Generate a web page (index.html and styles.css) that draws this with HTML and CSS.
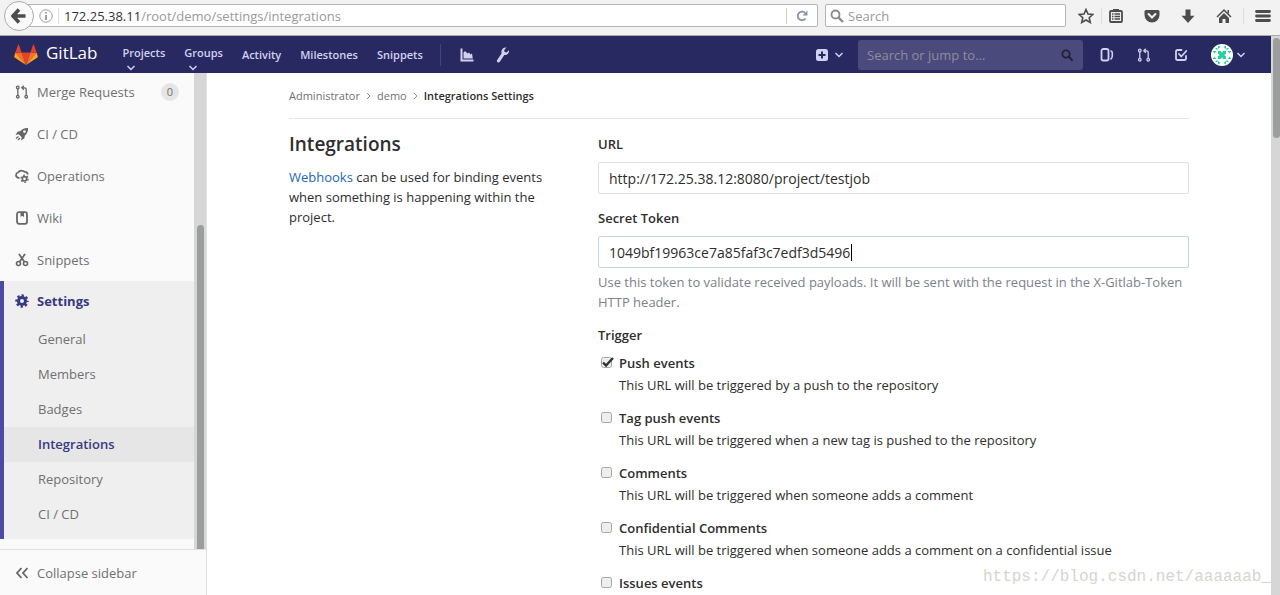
FILE: index.html
```html
<!DOCTYPE html>
<html lang="en">
<head>
    <meta charset="UTF-8">
    <meta name="viewport" content="width=device-width, initial-scale=1">
    <title>Integrations Settings</title>
    <link rel="stylesheet" href="styles.css">
</head>
<body>
    <!-- Browser toolbar -->
    <div class="toolbar">
        <button class="back-btn" aria-label="Back">
            <svg width="16" height="16" viewBox="0 0 16 16"><path d="M8 1.500 2 8l6 6.500M3 8h11.500" fill="none" stroke="#4d4d4d" stroke-width="3.600"/></svg>
        </button>
        <div class="url-bar">
            <svg width="14" height="14" viewBox="0 0 14 14"><circle cx="7" cy="7" r="6.200" fill="none" stroke="#999"/><path d="M6.200 3h1.600v1.600H6.200zM6.200 6h1.600v5H6.200z" fill="#888"/></svg>
            <span class="url-sep"></span>
            <div class="url-text" role="textbox" aria-label="Address" tabindex="0"><span class="host">172.25.38.11</span>/root/demo/settings/integrations</div>
            <button class="reload-btn" aria-label="Reload">
                <svg width="12" height="12" viewBox="0 0 12 12"><path d="M9.500 8.500A4.300 4.300 0 1 1 9 2.800" fill="none" stroke="#8597a5" stroke-width="1.800"/><path d="M11.500.5v5h-5z" fill="#8597a5"/></svg>
            </button>
        </div>
        <div class="browser-search">
            <svg width="14" height="14" viewBox="0 0 14 14"><circle cx="5.500" cy="5.500" r="4" fill="none" stroke="#8a8a8a" stroke-width="1.800"/><path d="m8.500 8.500 4.500 4.500" stroke="#8a8a8a" stroke-width="2.400"/></svg>
            <input type="text" placeholder="Search" aria-label="Search the web">
        </div>
        <div class="toolbar-icons">
            <button aria-label="Bookmark"><svg width="16" height="16" viewBox="0 0 16 16"><path d="m8 1.500 2 4.500 4.800.5-3.600 3.200 1.100 4.800L8 12l-4.300 2.500 1.100-4.800L1.200 6.500 6 6z" fill="none" stroke="#4d4d4d" stroke-width="1.600"/></svg></button>
            <button class="list-btn" aria-label="Bookmarks list"><svg width="16" height="16" viewBox="0 0 16 16"><path d="M5 3V1h6v2" fill="#4d4d4d"/><rect x="2" y="3" width="12" height="11" rx="1" fill="none" stroke="#4d4d4d" stroke-width="1.800"/><path d="M4 6h1.500M4 8.500h1.500M4 11h1.500M6.500 6H12M6.500 8.500H12M6.500 11H12" stroke="#4d4d4d" stroke-width="1.300"/></svg></button>
            <button aria-label="Pocket"><svg width="16" height="16" viewBox="0 0 16 16"><path d="M2 2h12q1.500 0 1.500 1.500V7a7.500 7.500 0 0 1-15 0V3.500Q.5 2 2 2z" fill="#4d4d4d"/><path d="m4.500 6 3.500 3.500L11.500 6" fill="none" stroke="#f2f2f2" stroke-width="2" stroke-linecap="round"/></svg></button>
            <button aria-label="Downloads"><svg width="16" height="16" viewBox="0 0 16 16"><path d="M5.500 1.500h5v6.200h4L8 15 1.500 7.700h4z" fill="#4d4d4d"/></svg></button>
            <button aria-label="Home"><svg width="16" height="16" viewBox="0 0 16 16"><path d="M1 9 8 2l7 7" fill="none" stroke="#4d4d4d" stroke-width="1.500"/><path d="M11.500 2H13v4l-1.500-1.500zM3 10l5-5 5 5v5H9.500v-4h-3v4H3z" fill="#4d4d4d"/></svg></button>
            <button class="menu-btn" aria-label="Menu"><svg width="16" height="16" viewBox="0 0 16 16"><path d="M1.500 3.500h13M1.500 8h13M1.500 12.500h13" stroke="#4d4d4d" stroke-width="2.800" stroke-linecap="round"/></svg></button>
        </div>
    </div>

    <div class="viewport">
        <div class="app">
            <!-- Navigation Bar -->
            <header class="navbar">
                <a class="brand" href="#">
                    <svg width="24" height="22" viewBox="0 0 24 22">
                        <path d="m12 21 4.400-12.500H7.600z" fill="#e24329"/>
                        <path d="M12 21 7.600 8.500H1.400zM12 21l4.400-12.500h6.200z" fill="#fc6d26"/>
                        <path d="M1.400 8.500.2 12.400c-.1.400 0 .8.400 1L12 21zM22.600 8.500l1.200 3.900c.1.400 0 .8-.4 1L12 21z" fill="#fca326"/>
                        <path d="M1.400 8.500h6.200L4.900.8c-.1-.4-.7-.4-.8 0zM22.600 8.500h-6.200L19.100.8c.1-.4.7-.4.8 0z" fill="#e24329"/>
                    </svg>
                    <span>GitLab</span>
                </a>
                <nav class="nav-links">
                    <a class="drop" href="#">Projects<svg width="10" height="6" viewBox="0 0 10 6"><path d="m1.500 1 3.500 3.500L8.500 1"/></svg></a>
                    <a class="drop" href="#">Groups<svg width="10" height="6" viewBox="0 0 10 6"><path d="m1.500 1 3.500 3.500L8.500 1"/></svg></a>
                    <a href="#">Activity</a>
                    <a href="#">Milestones</a>
                    <a href="#">Snippets</a>
                </nav>
                <div class="nav-tools">
                    <a href="#" aria-label="Instance statistics"><svg width="14" height="14" viewBox="0 0 14 14"><path d="M.5.5h2v11H13.500v2H.5z"/><path d="M3.500 10.500v-6L5 3l2.500 2.500L9 4.500l1.500 2L12 5.500l.8 5z"/></svg></a>
                    <a href="#" aria-label="Admin area"><svg width="14" height="16" viewBox="0 0 14 16"><path d="M8.300.8A4 4 0 0 0 5.700 6.200L1.200 13a1.500 1.500 0 0 0 2.600 1.700l4.500-6.800A4 4 0 0 0 13 3.200L10.500 5.500 8.600 5l-.4-2L10.500.6A4 4 0 0 0 8.300.8z"/></svg></a>
                </div>
                <button class="new-btn" aria-label="New">
                    <svg width="12" height="12" viewBox="0 0 12 12"><rect width="12" height="12" rx="2.500" fill="#d1d1f0"/><path d="M6 2.500v7M2.500 6h7" stroke="#292961" stroke-width="2"/></svg>
                    <svg class="chev" width="10" height="6" viewBox="0 0 10 6"><path d="m1.500 1 3.500 3.500L8.500 1"/></svg>
                </button>
                <div class="nav-search">
                    <input type="text" placeholder="Search or jump to…" aria-label="Search or jump to">
                    <svg width="12" height="12" viewBox="0 0 12 12"><circle cx="5" cy="5" r="3.700" fill="none" stroke="#222236" stroke-width="1.800"/><path d="m7.800 7.800 3.200 3.200" stroke="#222236" stroke-width="2.200" stroke-linecap="round"/></svg>
                </div>
                <div class="nav-icons">
                    <a href="#" aria-label="Issues"><svg width="14" height="14" viewBox="0 0 14 14"><rect x="1.500" y="1" width="7" height="11.500" rx="1.800" fill="none" stroke="#d1d1f0" stroke-width="1.800"/><path d="M10.500 2.800q1.800.5 1.800 2V8q0 2-1.800 3.500" fill="none" stroke="#d1d1f0" stroke-width="1.600"/></svg></a>
                    <a href="#" aria-label="Merge requests"><svg width="14" height="14" viewBox="0 0 14 14"><g fill="none" stroke="#d1d1f0" stroke-width="1.300"><circle cx="2.800" cy="2.500" r="1.300"/><circle cx="2.800" cy="11.700" r="1.300"/><circle cx="11.200" cy="11.700" r="1.300"/><path d="M2.800 4v6.200M11.200 10.200V4.500q0-1.700-1.700-1.700H7.500M8.800.8l-2 2 2 2"/></g></svg></a>
                    <a href="#" aria-label="Todos"><svg width="14" height="14" viewBox="0 0 14 14"><path d="M7.500 2H3.800Q2 2 2 3.800v6.400Q2 12 3.800 12h6.400q1.800 0 1.800-1.800V8M5 6l2.300 2.500 5-5.500" fill="none" stroke="#d1d1f0" stroke-width="1.800" stroke-linecap="round"/></svg></a>
                    <button class="user-btn" aria-label="Account">
                        <svg width="22" height="22" viewBox="0 0 22 22"><circle cx="11" cy="11" r="11" fill="#fff"/><path d="M7 1.500 9.500 3 7 5zM15 1.500 12.500 3 15 5zM7 20.500 9.500 19 7 17zM15 20.500 12.500 19l2.500-2zM1.500 7h4L3.500 9.500zM20.500 7h-4l2 2.500zM1.500 15h4L3.500 12.500zM20.500 15h-4l2-2.500zM4 4h2.500v2.500zM18 4h-2.500v2.500zM4 18h2.500v-2.500zM18 18h-2.500v-2.500zM7 7h3l1 2 1-2h3v3l-2 1 2 1v3h-3l-1-2-1 2H7v-3l2-1-2-1z" fill="#27cf9b"/></svg>
                        <svg class="chev" width="10" height="6" viewBox="0 0 10 6"><path d="m1.500 1 3.500 3.500L8.500 1"/></svg>
                    </button>
                </div>
            </header>

            <div class="page">
                <!-- Sidebar -->
                <aside class="sidebar">
                    <div class="side-scroll">
                        <nav class="side-list">
                            <a class="side-item" href="#"><svg width="14" height="14" viewBox="0 0 14 14"><g fill="none" stroke="#666" stroke-width="1.300"><circle cx="2.800" cy="2.500" r="1.300"/><circle cx="2.800" cy="11.700" r="1.300"/><circle cx="11.200" cy="11.700" r="1.300"/><path d="M2.800 4v6.200M11.200 10.200V4.500q0-1.700-1.700-1.700H7.500M8.800.8l-2 2 2 2"/></g></svg>Merge Requests<span class="count">0</span></a>
                            <a class="side-item" href="#"><svg width="14" height="14" viewBox="0 0 14 14"><path fill-rule="evenodd" d="M13 1Q8 .8 5.500 4L2.500 4.800.5 8l3.200-.7 3 3L6 13.500l3.200-2 .8-3Q13.300 6 13 1zM9.500 3.200a1.400 1.400 0 1 1 0 2.800 1.400 1.400 0 0 1 0-2.800z" fill="#666"/><path d="m3.500 9.500-2.500 2M5 11l-2 2" stroke="#666" stroke-width="1.300"/></svg>CI / CD</a>
                            <a class="side-item" href="#"><svg width="14" height="14" viewBox="0 0 14 14"><path d="M4.500 8.800H3.500Q1 8.500 1 6q.2-2.200 2-2.500Q5 .8 8 2l2 .8q2.500.2 2.800 2.700" fill="none" stroke="#666" stroke-width="1.700"/><circle cx="9.500" cy="9.800" r="2.200" fill="none" stroke="#666" stroke-width="1.600"/><circle cx="9.500" cy="9.800" r="3.600" fill="none" stroke="#666" stroke-width="1.200" stroke-dasharray="1.900 1.870"/></svg>Operations</a>
                            <a class="side-item" href="#"><svg width="14" height="14" viewBox="0 0 14 14"><rect x="2" y="1.200" width="10" height="11.600" rx="2" fill="none" stroke="#666" stroke-width="1.800"/><path d="M5.500 1h3.500v5L7.200 4.700 5.500 6z" fill="#666"/></svg>Wiki</a>
                            <a class="side-item" href="#"><svg width="14" height="14" viewBox="0 0 14 14"><path d="m4 1 5.500 8M10 1 4.500 9" stroke="#666" stroke-width="1.700"/><g fill="none" stroke="#666" stroke-width="1.600"><circle cx="3.500" cy="10.500" r="2"/><circle cx="10.500" cy="10.500" r="2"/></g></svg>Snippets</a>
                            <div class="side-active">
                                <a class="side-item current" href="#"><svg width="14" height="14" viewBox="0 0 14 14"><circle cx="7" cy="7" r="3.500" fill="none" stroke="#393982" stroke-width="3"/><circle cx="7" cy="7" r="5.500" fill="none" stroke="#393982" stroke-width="2.400" stroke-dasharray="2.300 2.020" stroke-dashoffset="1.150"/></svg>Settings</a>
                                <a class="sub-item" href="#">General</a>
                                <a class="sub-item" href="#">Members</a>
                                <a class="sub-item" href="#">Badges</a>
                                <a class="sub-item current" href="#">Integrations</a>
                                <a class="sub-item" href="#">Repository</a>
                                <a class="sub-item" href="#">CI / CD</a>
                            </div>
                        </nav>
                        <div class="side-track"><div class="side-thumb"></div></div>
                    </div>
                    <button class="collapse-btn">
                        <svg width="14" height="14" viewBox="0 0 14 14"><path d="M6.500 2 2 7l4.500 5M12.500 2 8 7l4.500 5" fill="none" stroke="#666" stroke-width="1.800"/></svg>
                        Collapse sidebar
                    </button>
                </aside>

                <!-- Content -->
                <main class="content">
                    <div class="container">
                        <nav class="breadcrumbs">
                            <a href="#">Administrator</a>
                            <svg width="5" height="8" viewBox="0 0 5 8"><path d="m1 1 3 3-3 3"/></svg>
                            <a href="#">demo</a>
                            <svg width="5" height="8" viewBox="0 0 5 8"><path d="m1 1 3 3-3 3"/></svg>
                            <strong>Integrations Settings</strong>
                        </nav>
                        <div class="row">
                            <section class="intro">
                                <h1>Integrations</h1>
                                <p><a href="#">Webhooks</a> can be used for binding events when something is happening within the project.</p>
                            </section>
                            <form class="hook-form">
                                <label class="label" for="url">URL</label>
                                <input class="field" type="text" id="url" value="http://172.25.38.12:8080/project/testjob">
                                <label class="label" for="token">Secret Token</label>
                                <div class="token-wrap">
                                    <input class="field token" type="text" id="token" value="1049bf19963ce7a85faf3c7edf3d5496">
                                    <span class="caret"></span>
                                </div>
                                <p class="help">Use this token to validate received payloads. It will be sent with the request in the X-Gitlab-Token HTTP header.</p>
                                <div class="label">Trigger</div>
                                <div class="triggers">
                                    <div class="trigger">
                                        <input type="checkbox" id="push" checked>
                                        <label for="push">Push events</label>
                                        <p>This URL will be triggered by a push to the repository</p>
                                    </div>
                                    <div class="trigger">
                                        <input type="checkbox" id="tag">
                                        <label for="tag">Tag push events</label>
                                        <p>This URL will be triggered when a new tag is pushed to the repository</p>
                                    </div>
                                    <div class="trigger">
                                        <input type="checkbox" id="comments">
                                        <label for="comments">Comments</label>
                                        <p>This URL will be triggered when someone adds a comment</p>
                                    </div>
                                    <div class="trigger">
                                        <input type="checkbox" id="confidential">
                                        <label for="confidential">Confidential Comments</label>
                                        <p>This URL will be triggered when someone adds a comment on a confidential issue</p>
                                    </div>
                                    <div class="trigger">
                                        <input type="checkbox" id="issues">
                                        <label for="issues">Issues events</label>
                                    </div>
                                </div>
                            </form>
                        </div>
                    </div>
                    <div class="watermark">https://blog.csdn.net/aaaaaab_</div>
                </main>
            </div>
        </div>
        <div class="page-track"><div class="page-thumb"></div></div>
    </div>
</body>
</html>
```
FILE: styles.css
```css
* {
    box-sizing: border-box;
}
body {
    margin: 0;
    height: 100vh;
    display: flex;
    flex-direction: column;
    overflow: hidden;
    font-family: 'Open Sans', 'Noto Sans', sans-serif;
    font-size: 13px;
    line-height: 20px;
    color: #2e2e2e;
    background-color: #fff;
}
a {
    text-decoration: none;
    color: inherit;
}
button {
    padding: 0;
    border: none;
    background: none;
    font: inherit;
    color: inherit;
    cursor: pointer;
}
input {
    font: inherit;
    outline: none;
}
p {
    margin: 0;
}
svg {
    display: block;
    flex-shrink: 0;
}
/* Browser toolbar */
.toolbar {
    display: flex;
    align-items: center;
    flex-shrink: 0;
    height: 36px;
    padding: 0 9px 4px 4px;
    background-color: #f2f2f2;
    border-bottom: 1px solid #aaa;
}
.back-btn {
    display: flex;
    align-items: center;
    justify-content: center;
    width: 30px;
    height: 30px;
    border: 1px solid #aaa;
    border-radius: 50%;
    background-color: #fafafa;
    z-index: 1;
}
.url-bar {
    display: flex;
    align-items: center;
    flex: 1;
    height: 23px;
    margin-left: -15px;
    padding-left: 19px;
    border: 1px solid #b5b5b5;
    border-radius: 2px;
    background-color: #fff;
}
.url-sep {
    width: 1px;
    height: 16px;
    margin: 0 5px;
    background-color: #ddd;
}
.url-text {
    flex: 1;
    color: #999;
    white-space: nowrap;
}
.host {
    color: #333;
}
.reload-btn {
    padding: 2px 9px;
    border-left: 1px solid #ccc;
}
.browser-search {
    display: flex;
    align-items: center;
    gap: 4px;
    width: 241px;
    height: 23px;
    margin: 0 12px 0 7px;
    padding: 0 4px;
    border: 1px solid #b5b5b5;
    border-radius: 2px;
    background-color: #fff;
}
.browser-search input {
    flex: 1;
    min-width: 0;
    padding: 0;
    border: none;
}
.browser-search input::placeholder {
    color: #999;
}
.toolbar-icons {
    display: flex;
    gap: 20px;
}
.list-btn {
    padding-left: 6px;
    margin-left: -13px;
    border-left: 1px solid #ddd;
}
.menu-btn {
    padding-left: 11px;
    margin-left: -9px;
    border-left: 1px solid #ddd;
}
.viewport {
    display: flex;
    flex: 1;
    min-height: 0;
}
.app {
    display: flex;
    flex-direction: column;
    flex: 1;
    min-width: 0;
}
/* Navigation Bar */
.navbar {
    display: flex;
    align-items: center;
    flex-shrink: 0;
    height: 37px;
    padding: 0 25px 0 14px;
    background-color: #292961;
    color: #d1d1f0;
}
.brand {
    display: flex;
    align-items: center;
    gap: 8px;
    font-size: 17px;
    color: #fff;
}
.brand span {
    margin-top: -4px;
}
.nav-links {
    display: flex;
    align-items: center;
    gap: 19px;
    margin-left: 25px;
    font-size: 11px;
    font-weight: 600;
}
.drop {
    display: flex;
    flex-direction: column;
    line-height: 16px;
    padding-top: 6px;
}
.drop svg {
    margin: 4px 0 0 4px;
}
.drop path,
.chev path {
    fill: none;
    stroke: #d1d1f0;
    stroke-width: 1.5;
}
.nav-tools {
    display: flex;
    align-items: center;
    gap: 22px;
    height: 22px;
    margin-left: 17px;
    padding-left: 19px;
    border-left: 1px solid #44447c;
    fill: #d1d1f0;
}
.new-btn {
    display: flex;
    align-items: center;
    gap: 6px;
    margin-left: auto;
}
.nav-search {
    display: flex;
    align-items: center;
    width: 225px;
    height: 30px;
    margin: 0 17px 0 14px;
    padding: 0 10px 0 9px;
    border-radius: 3px;
    background-color: #4a4a7d;
}
.nav-search input {
    flex: 1;
    min-width: 0;
    padding: 0;
    border: none;
    background: none;
    color: #fff;
}
.nav-search input::placeholder {
    color: #8d8d9c;
}
.nav-icons {
    display: flex;
    align-items: center;
    gap: 23px;
}
.user-btn {
    display: flex;
    align-items: center;
    gap: 3px;
}
.page {
    display: flex;
    flex: 1;
    min-height: 0;
}
/* Sidebar */
.sidebar {
    display: flex;
    flex-direction: column;
    width: 207px;
    flex-shrink: 0;
    border-right: 1px solid #e1e1e1;
    background-color: #fafafa;
    color: #707070;
}
.side-scroll {
    display: flex;
    flex: 1;
    min-height: 0;
}
.side-list {
    display: flex;
    flex-direction: column;
    justify-content: flex-end;
    flex: 1;
    padding-bottom: 10px;
    overflow: hidden;
}
.side-item {
    display: flex;
    align-items: center;
    flex-shrink: 0;
    gap: 8px;
    height: 42px;
    padding: 0 15px 1px;
}
.count {
    margin-left: auto;
    width: 18px;
    border-radius: 9px;
    font-size: 11px;
    line-height: 18px;
    text-align: center;
    background-color: #e5e5e5;
}
.side-active {
    flex-shrink: 0;
    padding-bottom: 7px;
    border-left: 4px solid #4b4ba3;
    background-color: #efefef;
}
.side-active .side-item {
    height: 41px;
    padding-left: 11px;
}
.sub-item {
    display: block;
    padding-left: 34px;
    line-height: 35px;
}
.current {
    font-weight: 700;
    color: #393982;
}
.sub-item.current {
    font-weight: 600;
    background-color: #e6e6e6;
}
.side-track {
    display: flex;
    align-items: flex-end;
    justify-content: center;
    width: 12px;
    background-color: #d6d6d6;
}
.side-thumb {
    width: 7px;
    height: 68%;
    border-radius: 4px 4px 0 0;
    background-color: #9b9d9e;
}
.collapse-btn {
    display: flex;
    align-items: center;
    gap: 8px;
    height: 46px;
    padding: 1px 15px 0;
    border-top: 1px solid #e1e1e1;
}
/* Content */
.content {
    flex: 1;
    min-width: 0;
    position: relative;
    overflow: hidden;
}
.container {
    max-width: 900px;
    margin: 0 auto;
}
.breadcrumbs {
    display: flex;
    align-items: center;
    gap: 6px;
    height: 46px;
    border-bottom: 1px solid #e5e5e5;
    font-size: 11px;
    color: #707070;
}
.breadcrumbs path {
    fill: none;
    stroke: #999;
}
.breadcrumbs strong {
    font-weight: 600;
    color: #2e2e2e;
}
.row {
    display: grid;
    grid-template-columns: 279px minmax(0, 1fr);
    gap: 30px;
    padding-top: 15px;
}
.intro h1 {
    margin: 0 0 13px;
    font-size: 19px;
    line-height: 20px;
    font-weight: 600;
}
.intro p {
    max-width: 260px;
}
.intro p a {
    color: #1b69b6;
}
.hook-form {
    display: flex;
    flex-direction: column;
}
.label,
.trigger label {
    font-weight: 600;
}
.field {
    width: 100%;
    height: 32px;
    margin: 8px 0 14px;
    padding: 0 10px;
    border: 1px solid #dfdfdf;
    border-radius: 2px;
    background-color: #fff;
    font-size: 14px;
    color: #2e2e2e;
}
.token-wrap {
    display: flex;
    position: relative;
    margin: 8px 0 4px;
}
.field.token {
    margin: 0;
    border-color: #c3d6ea;
}
.caret {
    position: absolute;
    left: 253px;
    top: 8px;
    width: 1px;
    height: 17px;
    background-color: #000;
}
.help {
    margin-bottom: 13px;
    color: #7a828a;
}
.triggers {
    display: grid;
    gap: 11px;
    padding-top: 7px;
}
.trigger {
    display: grid;
    grid-template-columns: 16px 1fr;
    align-items: center;
    column-gap: 3px;
    padding-left: 2px;
    line-height: 22px;
}
.trigger p {
    grid-column: 2;
}
.trigger input {
    appearance: none;
    width: 14px;
    height: 14px;
    margin: 0;
    background: url("data:image/svg+xml,%3Csvg xmlns='http://www.w3.org/2000/svg' viewBox='0 0 14 14'%3E%3Crect x='1.5' y='1.5' width='10' height='10' rx='2' fill='%23eee' stroke='%23a5a5a5'/%3E%3C/svg%3E");
}
.trigger input:checked {
    background: url("data:image/svg+xml,%3Csvg xmlns='http://www.w3.org/2000/svg' viewBox='0 0 14 14'%3E%3Crect x='1.5' y='1.5' width='10' height='10' rx='2' fill='%23eee' stroke='%23a5a5a5'/%3E%3Cpath d='m3 6.5 3 3L13 2' fill='none' stroke='%232e3436' stroke-width='2.4'/%3E%3C/svg%3E");
}
.watermark {
    position: absolute;
    right: 0;
    bottom: 8px;
    font-family: 'Liberation Mono', monospace;
    font-size: 16px;
    color: #d5d5d0;
}
/* Page scrollbar */
.page-track {
    width: 9px;
    padding: 2px 0 0 2px;
    background-color: #d6d6d6;
}
.page-thumb {
    height: 100px;
    border-radius: 4px;
    background-color: #9b9d9e;
}
```
